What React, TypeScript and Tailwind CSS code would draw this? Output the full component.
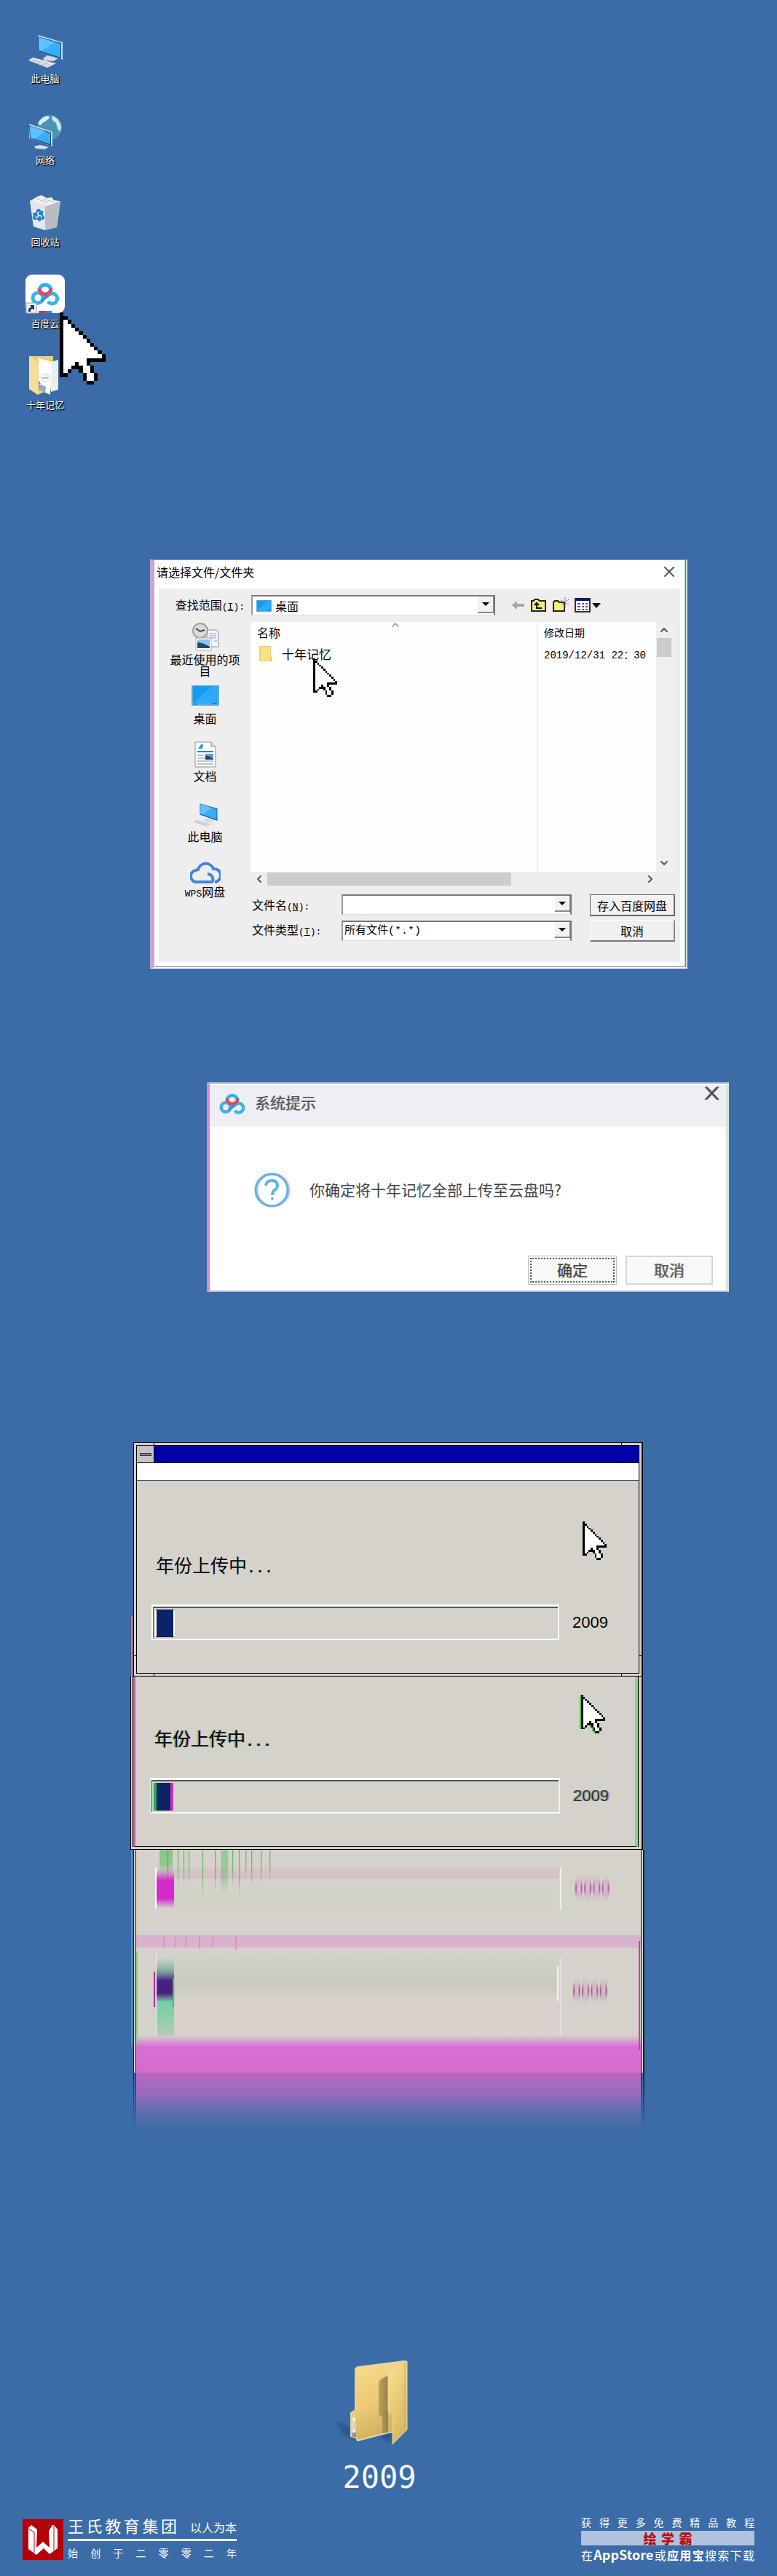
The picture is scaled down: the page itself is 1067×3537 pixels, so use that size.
import React, { useState } from 'react';
import { ChevronDown, ChevronLeft, ChevronRight, ChevronUp, Recycle, X } from 'lucide-react';

const CURSOR_ROWS = [
    'X',
    'XX',
    'XoX',
    'XooX',
    'XoooX',
    'XooooX',
    'XoooooX',
    'XooooooX',
    'XoooooooX',
    'XooooooooX',
    'XoooooooooX',
    'XooooooooooX',
    'XooooooXXXXX',
    'XoooXooX',
    'XooXXXooX',
    'XoX..XooX',
    'XX....XooX',
    '......XooX',
    '.......XX',
];

const PixelCursor = ({ className }: { className: string }) => (
    <svg className={className} viewBox="0 0 12 19" shapeRendering="crispEdges" aria-hidden="true">
        {CURSOR_ROWS.map((row, y) =>
            row.split('').map((cell, x) =>
                cell === '.' ? null : (
                    <rect key={`${x}-${y}`} x={x} y={y} width="1" height="1" fill={cell === 'X' ? '#000' : '#fff'} />
                )
            )
        )}
    </svg>
);

const ComputerIcon = ({ className }: { className: string }) => (
    <svg className={className} viewBox="0 0 54 54" aria-hidden="true">
        <path d="M4 42 L10 38 L42 46 L30 52 Z" fill="#e3e3e6" />
        <path d="M9 41 L34 48 M7 43 L31 50 M14 40 L10 44 M22 42 L17 46 M30 44 L25 48" stroke="#b8bcc4" strokeWidth="1" />
        <path d="M24 39 L30 35 L45 39 L38 43 L26 42 Z" fill="#d5dae2" />
        <path d="M17 7 L51 17 L51 41 L17 29 Z" fill="#c3dcef" />
        <path d="M17 9 L49 18 L49 40 L17 29 Z" fill="#174a78" />
        <path d="M18 10 L48 19 L48 38 L18 28 Z" fill="#38aef8" />
        <path d="M18 10 L40 17 L22 29 L18 28 Z" fill="#5cc3ff" />
    </svg>
);

const NetworkIcon = ({ className }: { className: string }) => (
    <svg className={className} viewBox="0 0 54 54" aria-hidden="true">
        <circle cx="33" cy="22" r="17" fill="#4d94b4" />
        <path d="M17 17 Q21 7 31 6 L33 9 L27 14 L23 16 L21 19 Z" fill="#d6edf5" />
        <path d="M36 6 Q47 9 49 21 L48 28 L44 24 L42 16 L37 12 Z" fill="#c6e6f0" />
        <path d="M12 48 L20 46 L32 49 L26 52 L14 51 Z" fill="#dcdfe3" />
        <path d="M5 17 L37 28 L37 48 L5 37 Z" fill="#c3dcef" />
        <path d="M5 19 L35 29 L35 47 L6 37 Z" fill="#174a78" />
        <path d="M6 20 L34 30 L34 45 L7 36 Z" fill="#38aef8" />
        <path d="M6 20 L27 27 L12 38 L7 36 Z" fill="#5cc3ff" />
    </svg>
);

const BinIcon = ({ className }: { className: string }) => (
    <svg className={className} viewBox="0 0 54 54" aria-hidden="true">
        <path d="M6 10 L48 11 L43 47 L27 51 L11 46 Z" fill="#cfd3d8" />
        <path d="M27 18 L48 11 L43 47 L27 51 Z" fill="#b9bdc3" />
        <path d="M8 10 L16 5 L22 3 L29 7 L36 6 L39 10 L46 11 L35 16 L28 18 L14 13 Z" fill="#eef0f2" />
        <path d="M16 7 L22 11 L30 8 M24 14 L33 10 L38 13" stroke="#b5b9be" strokeWidth="1" fill="none" />
        <path d="M6 10 L27 18 L27 51 L11 46 Z" fill="#e3e6ea" />
        <Recycle x={9} y={21} width={18} height={18} color="#1c86cc" strokeWidth={4} />
    </svg>
);

const BaiduRings = () => (
    <g fill="none" strokeWidth="5">
        <circle cx="17" cy="32" r="7" stroke="#3db4e4" />
        <path d="M22 28 L28 28 L33 27 A7 7 0 1 1 31 37" stroke="#3bb6e2" />
        <path d="M19 22 A8 8 0 1 1 35 22" stroke="#2fb3e0" />
        <path d="M19 19 A8 8 0 0 0 35 19" stroke="#e8455f" />
        <path d="M22 36 L32 28" stroke="#3b8fdc" strokeWidth="4" />
    </g>
);

const BaiduIcon = ({ className }: { className: string }) => (
    <svg className={className} viewBox="0 0 54 54" aria-hidden="true">
        <rect width="54" height="53" rx="9" fill="#fff" />
        <BaiduRings />
        <path d="M18 50 H27 V53 H18 Z" fill="#e03040" />
        <path d="M27 50 H36 V53 H27 Z" fill="#2f7fd8" />
        <rect x="1" y="39" width="14" height="14" fill="#eef2f8" stroke="#9a9aa6" />
        <path d="M4 51 Q3 45 8 45 L6 42 L12 42 L12 49 L10 47 Q7 47 7 51 Z" fill="#1d3a78" />
    </svg>
);

const MemoryFolderIcon = ({ className }: { className: string }) => (
    <svg className={className} viewBox="0 0 54 54" aria-hidden="true">
        <path d="M5 0 H38 V44 L17 53 L5 45 Z" fill="#e9cf81" />
        <path d="M5 0 L17 8 V53 L5 45 Z" fill="#f5de97" />
        <path d="M35 8 L45 5 V46 L35 49 Z" fill="#e9eef3" />
        <path d="M18 3 L33 7 Q36 8 36 11 L34 53 L18 46 Z" fill="#fff" />
        <path d="M18 38 L28 42 L27 50 L18 46 Z" fill="#8cabb6" />
        <circle cx="27" cy="30" r="6" fill="#f3f4f5" stroke="#d5d8da" />
        <path d="M23 30 H31" stroke="#808890" />
        <path d="M18 35 L20 38" stroke="#d4675b" strokeWidth="2" />
    </svg>
);

const RecentIcon = () => (
    <svg className="h-10 w-10" viewBox="0 0 40 40" aria-hidden="true">
        <path d="M22 11 H35 L38 14 V34 H22 Z" fill="#f5f6f8" stroke="#8b8f98" />
        <path d="M25 16 H35 M25 19 H35 M25 22 H35 M32 26 H36" stroke="#7fa2c8" />
        <circle cx="13" cy="12" r="10" fill="#dedbd5" stroke="#a29da2" strokeWidth="2" />
        <path d="M7 9 L13 13 L19 11" stroke="#444" strokeWidth="2" fill="none" />
        <path d="M7 22 H28 V39 H7 Z" fill="#fff" stroke="#b0a9b4" />
        <path d="M9 24 H26 V36 H9 Z" fill="#8fc4ea" />
        <path d="M9 28 Q16 28 26 34 V36 H9 Z" fill="#1f4a6a" />
    </svg>
);

const DesktopIcon = ({ className }: { className: string }) => (
    <svg className={className} viewBox="0 0 38 28" preserveAspectRatio="none" aria-hidden="true">
        <rect width="38" height="28" fill="#5eaee0" />
        <rect x="2" y="1" width="34" height="24" fill="#159bf5" />
        <path d="M2 25 L28 1 H36 V25 Z" fill="#2ea8fb" />
        <path d="M3 26 H7 M28 25 H35" stroke="#0b4c86" strokeWidth="1" />
    </svg>
);

const DocumentIcon = () => (
    <svg className="h-9 w-[30px]" viewBox="0 0 30 36" aria-hidden="true">
        <path d="M1 1 H23 L29 7 V35 H1 Z" fill="#fff" stroke="#8f9196" />
        <path d="M23 1 V7 H29" fill="#dcdcdc" stroke="#8f9196" />
        <path d="M5 10 L9 4 L12 4 L11 10 Z" fill="#2d9be0" />
        <path d="M4 14 H26" stroke="#2a86c8" strokeWidth="2" />
        <path d="M4 19 H14 M4 23 H14 M4 27 H26 M4 31 H26" stroke="#7d8894" />
        <rect x="15" y="17" width="11" height="8" fill="#5aa2cf" />
        <path d="M15 20 Q19 19 26 24 V25 H15 Z" fill="#1c4560" />
    </svg>
);

const WpsCloudIcon = () => (
    <svg className="h-8 w-[42px]" viewBox="0 0 42 32" fill="none" aria-hidden="true">
        <path
            d="M31 30 H10 A8 8 0 0 1 8 14 Q10 13 11 13 A11 11 0 0 1 32 12 A9 9 0 0 1 34 30 M31 30 Q33 20 24 19"
            stroke="#3f87dd"
            strokeWidth="4"
        />
    </svg>
);

const SmallFolderIcon = () => (
    <svg className="h-6 w-5" viewBox="0 0 20 24" aria-hidden="true">
        <path d="M1 1 H17 V15 L19 17 V22 H1 Z" fill="#efcf6d" />
        <path d="M3 2 H16 V21 H3 Z" fill="#fbe08c" />
    </svg>
);

const Mono = ({ children }: { children: React.ReactNode }) => (
    <span className="font-['Liberation_Mono',monospace] text-[13px] leading-3">{children}</span>
);

const desktopItems = [
    { label: '此电脑', Icon: ComputerIcon },
    { label: '网络', Icon: NetworkIcon },
    { label: '回收站', Icon: BinIcon },
    { label: '百度云', Icon: BaiduIcon },
    { label: '十年记忆', Icon: MemoryFolderIcon },
];

const DesktopIcons = () => (
    <nav className="flex flex-col items-start gap-[35px] pt-[41px] pl-[22px]">
        {desktopItems.map(({ label, Icon }) => (
            <a
                key={label}
                href="#"
                className="relative flex w-20 flex-col items-center gap-[3px] text-[13px] leading-5 text-white [text-shadow:1px_1px_2px_#000,1px_1px_1px_#000]"
            >
                <Icon className="h-[54px] w-[54px]" />
                {label}
                {label === '百度云' && <PixelCursor className="absolute top-[52px] left-[60px] z-10 h-[99px] w-[63px]" />}
            </a>
        ))}
    </nav>
);

const places = [
    { label: '最近使用的项目', icon: <RecentIcon />, box: 'h-[87px]' },
    { label: '桌面', icon: <DesktopIcon className="h-7 w-[38px]" />, box: 'h-[77px]' },
    { label: '文档', icon: <DocumentIcon />, box: 'h-[79px]' },
    { label: '此电脑', icon: <ComputerIcon className="h-10 w-11" />, box: 'h-[84px]' },
    { label: 'WPS网盘', icon: <WpsCloudIcon />, box: 'h-14' },
];

const Triangle = () => (
    <svg className="h-[5px] w-[10px]" viewBox="0 0 10 5" aria-hidden="true">
        <path d="M0 0 H10 L5 5 Z" fill="#000" />
    </svg>
);

const FileDialog = () => {
    const [fileName, setFileName] = useState('');

    return (
        <section className="border-t border-r-2 border-b-2 border-l-[6px] border-t-[#7890aa] border-r-[#d5d2e2] border-b-white border-l-[#c9a3d0] text-base leading-4 text-black">
            <div className="border-r border-b border-[#777] bg-white">
                <header className="flex h-[39px] items-center justify-between border-r-2 border-[#c4edc8] pr-2 pb-2 pl-[3px]">
                    <h2>请选择文件/文件夹</h2>
                    <button type="button" aria-label="关闭">
                        <X className="h-6 w-6 text-[#555]" strokeWidth={2} />
                    </button>
                </header>
                <div className="border-r-2 border-[#c4edc8] pr-[5px] pb-[6px] pl-[6px]">
                    <div className="bg-[#efeeef] pb-7">
                        <div className="flex h-[46px] items-start pt-[9px]">
                            <label htmlFor="look-in" className="w-[127px] pt-[5px] pr-[9px] text-right">
                                查找范围<Mono>(<u>I</u>):</Mono>
                            </label>
                            <div className="relative flex h-7 w-[335px] items-center border-t-2 border-r-2 border-b border-l-2 border-t-[#777] border-r-[#777] border-b-[#ddd] border-l-[#999] bg-white pl-[5px]">
                                <DesktopIcon className="h-4 w-[21px]" />
                                <select id="look-in" className="h-full flex-1 appearance-none bg-white pl-[5px] text-base leading-4 outline-none">
                                    <option>桌面</option>
                                </select>
                                <span className="pointer-events-none absolute top-0 right-0 flex h-[23px] w-[22px] items-center justify-center border-r border-b-2 border-[#888] bg-[#f3f2f3]">
                                    <Triangle />
                                </span>
                            </div>
                            <div className="flex items-center gap-2 pt-[3px] pl-[23px]">
                                <button type="button" aria-label="后退">
                                    <svg className="h-3 w-[18px]" viewBox="0 0 18 12">
                                        <path d="M0 6 L7 0 V4 H17 V8 H7 V12 Z" fill="#a9a5aa" />
                                    </svg>
                                </button>
                                <button type="button" aria-label="向上一级">
                                    <svg className="h-[21px] w-[22px]" viewBox="0 0 22 21">
                                        <path d="M1 4 H4 L5 2 H10 L12 4 H20 V18 H1 Z" fill="#f6ef79" stroke="#222" strokeWidth="2" />
                                        <path d="M8 8 V14 H15 M5 10 L8 7 L11 10" stroke="#111" strokeWidth="2" fill="none" />
                                    </svg>
                                </button>
                                <button type="button" aria-label="新建文件夹">
                                    <svg className="h-[22px] w-[22px]" viewBox="0 0 22 22">
                                        <path d="M1 7 L3 5 H7 L9 7 H16 V19 H1 Z" fill="#f6ef79" stroke="#222" strokeWidth="2" />
                                        <path d="M17 0 V14 M11 4 L22 11 M22 3 L12 11" stroke="#8a3c9c" strokeDasharray="2 1" />
                                    </svg>
                                </button>
                                <button type="button" aria-label="查看" className="flex items-center gap-[2px]">
                                    <svg className="h-5 w-[22px]" viewBox="0 0 22 20">
                                        <rect x="1" y="1" width="20" height="18" fill="#fff" stroke="#333" strokeWidth="2" />
                                        <path d="M1 2 H21" stroke="#101c66" strokeWidth="4" />
                                        <path d="M4 8 H8 M10 8 H13 M15 8 H18 M4 12 H8 M10 12 H13 M15 12 H18 M4 16 H8 M10 16 H13 M15 16 H18" stroke="#63509c" strokeWidth="2" />
                                    </svg>
                                    <svg className="h-[7px] w-3" viewBox="0 0 12 7">
                                        <path d="M0 0 H12 L6 7 Z" fill="#111" />
                                    </svg>
                                </button>
                            </div>
                        </div>
                        <div className="flex">
                            <ul className="flex w-[127px] flex-col">
                                {places.map((place) => (
                                    <li key={place.label} className={place.box}>
                                        <a href="#" className="flex flex-col items-center gap-[3px] text-center">
                                            {place.icon}
                                            <span className={place.label === '桌面' ? 'w-[98px] pt-[6px]' : 'w-[98px]'}>
                                                {place.label === 'WPS网盘' ? (
                                                    <>
                                                        <Mono>WPS</Mono>网盘
                                                    </>
                                                ) : (
                                                    place.label
                                                )}
                                            </span>
                                        </a>
                                    </li>
                                ))}
                            </ul>
                            <div className="min-w-0 flex-1 pr-[7px]">
                                <div className="flex h-[343px]">
                                    <div className="relative min-w-0 flex-1 bg-[#fefefe]">
                                        <table className="h-full w-full table-fixed text-left">
                                            <thead>
                                                <tr className="h-7">
                                                    <th scope="col" className="pl-2 font-normal">名称</th>
                                                    <th scope="col" className="w-[163px] border-l-2 border-[#eee] pl-2 text-sm font-normal">修改日期</th>
                                                </tr>
                                            </thead>
                                            <tbody>
                                                <tr className="h-8">
                                                    <td className="pl-[10px]">
                                                        <span className="flex items-center gap-3 text-[17px]">
                                                            <SmallFolderIcon />
                                                            十年记忆
                                                        </span>
                                                    </td>
                                                    <td className="border-l-2 border-[#eee] pt-1 pl-2 font-['Liberation_Mono','Noto_Sans_CJK_SC',monospace] text-sm whitespace-nowrap">
                                                        2019/12/31 22：30
                                                    </td>
                                                </tr>
                                                <tr>
                                                    <td></td>
                                                    <td className="border-l-2 border-[#eee]"></td>
                                                </tr>
                                            </tbody>
                                        </table>
                                        <ChevronUp className="absolute -top-1 left-[190px] h-4 w-4 text-[#888]" strokeWidth={2} />
                                        <PixelCursor className="absolute top-[50px] left-[85px] h-[53px] w-[33px]" />
                                    </div>
                                    <div className="flex w-[26px] flex-col items-center bg-[#eeefee] pr-[5px]">
                                        <ChevronUp className="my-[3px] h-4 w-4 text-[#555]" strokeWidth={3} />
                                        <span className="h-[26px] w-5 bg-[#cdcbcd]" />
                                        <ChevronDown className="mt-auto mb-1 h-4 w-4 text-[#555]" strokeWidth={3} />
                                    </div>
                                </div>
                                <div className="flex h-[19px] items-center pr-[26px]">
                                    <ChevronLeft className="mx-[3px] h-4 w-4 text-[#555]" strokeWidth={3} />
                                    <span className="h-[18px] w-[335px] bg-[#cdcbcd]" />
                                    <ChevronRight className="ml-auto h-4 w-4 text-[#555]" strokeWidth={3} />
                                </div>
                                <div className="flex items-start justify-between pt-3">
                                    <div className="grid grid-cols-[123px_316px] gap-y-2 pl-[1px]">
                                        <label htmlFor="file-name" className="pt-[6px]">
                                            文件名<Mono>(<u>N</u>):</Mono>
                                        </label>
                                        <div className="relative h-7 border-t-2 border-r-2 border-b border-l-2 border-t-[#777] border-r-[#777] border-b-[#ddd] border-l-[#999] bg-white">
                                            <input
                                                id="file-name"
                                                value={fileName}
                                                onChange={(e) => setFileName(e.target.value)}
                                                className="h-full w-full bg-white px-1 outline-none"
                                            />
                                            <button type="button" aria-label="历史文件名" className="absolute top-0 right-0 flex h-[22px] w-[21px] items-center justify-center border-r border-b-2 border-[#888] bg-[#f3f2f3]">
                                                <Triangle />
                                            </button>
                                        </div>
                                        <label htmlFor="file-type" className="pt-1">
                                            文件类型<Mono>(<u>T</u>):</Mono>
                                        </label>
                                        <div className="relative h-7 border-t-2 border-r-2 border-b border-l-2 border-t-[#777] border-r-[#777] border-b-[#ddd] border-l-[#999] bg-white">
                                            <select
                                                id="file-type"
                                                className="h-full w-full appearance-none bg-white pl-[2px] font-['Liberation_Mono','Noto_Sans_CJK_SC',monospace] text-[15px] leading-5 outline-none"
                                            >
                                                <option>所有文件(*.*)</option>
                                            </select>
                                            <span className="pointer-events-none absolute top-0 right-0 flex h-[22px] w-[21px] items-center justify-center border-r border-b-2 border-[#888] bg-[#f3f2f3]">
                                                <Triangle />
                                            </span>
                                        </div>
                                    </div>
                                    <div className="flex w-[117px] flex-col gap-[5px]">
                                        <button type="button" className="h-[30px] border border-r-2 border-b-2 border-[#666] bg-[#f3f2f3] whitespace-nowrap">
                                            存入百度网盘
                                        </button>
                                        <button type="button" className="h-[30px] border-t border-r-2 border-b-2 border-l border-t-white border-r-[#888] border-b-[#777] border-l-white bg-[#f1f0f1]">
                                            取消
                                        </button>
                                    </div>
                                </div>
                            </div>
                        </div>
                    </div>
                </div>
            </div>
        </section>
    );
};

const ConfirmDialog = () => (
    <section className="flex h-[288px] flex-col border-t-2 border-r-4 border-b-2 border-l-4 border-t-[#aebacb] border-r-[#cfe9dc] border-b-[#aebacb] border-l-[#df83df] bg-white text-[21px] text-[#444]">
        <header className="flex h-[59px] items-start justify-between border-t-2 border-white bg-[#eeeff4] pr-2 pl-3">
            <div className="flex items-center gap-3 pt-[6px]">
                <svg className="h-9 w-[38px]" viewBox="6 7 42 36" aria-hidden="true">
                    <BaiduRings />
                </svg>
                <h2 className="text-[#555] [text-shadow:-1px_0_#a5dca5,1px_0_#e0a8e0]">系统提示</h2>
            </div>
            <button type="button" aria-label="关闭">
                <svg className="mt-[2px] h-[18px] w-6" viewBox="0 0 24 18" fill="none" strokeWidth="2">
                    <path d="M3 0 L20 18 M20 0 L3 18" stroke="#5cc45c" />
                    <path d="M5 0 L22 18 M22 0 L5 18" stroke="#b45ab4" />
                    <path d="M4 0 L21 18 M21 0 L4 18" stroke="#4a4a4a" />
                </svg>
            </button>
        </header>
        <div className="flex flex-1 items-center gap-[26px] pb-1 pl-[60px]">
            <svg className="h-[50px] w-[51px]" viewBox="0 0 51 50" fill="none" aria-hidden="true">
                <circle cx="27" cy="25" r="22" stroke="#e4b2f0" strokeWidth="3" />
                <circle cx="25" cy="25" r="22" stroke="#53b7e6" strokeWidth="3" />
                <path d="M17 19 Q18 12 25 12 Q33 12 33 19 Q33 23 28 26 Q26 28 26 32" stroke="#61b4e8" strokeWidth="4" />
                <circle cx="26" cy="37" r="2" fill="#7daeea" />
            </svg>
            <p>你确定将十年记忆全部上传至云盘吗?</p>
        </div>
        <div className="flex justify-end gap-3 pr-[18px] pb-2">
            <button type="button" className="h-10 w-[122px] border border-[#b6c4b6] bg-[#f8f8f8] p-[2px]">
                <span className="flex h-full items-center justify-center border-2 border-dotted border-[#555] text-[#444] [text-shadow:-1px_0_#a5dca5,1px_0_#e0a8e0]">
                    确定
                </span>
            </button>
            <button type="button" className="h-10 w-[120px] border-2 border-[#d8d4da] bg-[#f8f8f8] text-[#555] [text-shadow:-1px_0_#a5dca5,1px_0_#e0a8e0]">
                取消
            </button>
        </div>
    </section>
);

const UploadBody = ({ glitch }: { glitch?: boolean }) => (
    <div className={glitch ? 'pt-[25px] pr-9 pb-[45px] pl-5' : 'pt-14 pr-[42px] pb-[45px] pl-5'}>
        <div className={glitch ? 'flex h-[45px] justify-end pr-1' : 'flex h-[45px] justify-end pr-[2px]'}>
            {glitch ? (
                <PixelCursor className="h-[53px] w-[35px] drop-shadow-[-2px_0_0_#3fce3f]" />
            ) : (
                <PixelCursor className="h-[53px] w-[33px]" />
            )}
        </div>
        <p
            className={
                glitch
                    ? 'h-7 pl-[6px] text-[25px] leading-7 [text-shadow:-2px_0_#7fd07f,1px_0_#d070d0]'
                    : 'h-7 pl-[6px] text-[25px] leading-7'
            }
        >
            年份上传中<span className="font-['Liberation_Mono',monospace] text-xl leading-4 font-bold">...</span>
        </p>
        <div className="flex items-center gap-[18px] pt-[41px]">
            <div
                role="progressbar"
                aria-label="上传进度"
                aria-valuenow={4}
                className={
                    glitch
                        ? 'flex-1 border-2 border-t-[3px] border-white border-l-[#c9f0c9] border-r-[#eaf6e0]'
                        : 'flex-1 border-2 border-t-[3px] border-white'
                }
            >
                <div className="h-11 border-t-2 border-l border-[#555] p-[2px]">
                    <div
                        className={
                            glitch
                                ? 'h-[38px] w-[27px] border-r-4 border-l-4 border-r-[#cb2bc4] border-l-[#2aa65c] bg-[#0a2468]'
                                : 'h-[38px] w-[27px] border-2 border-t border-b border-white border-t-[#001040] border-b-[#001040] bg-[#0a2468]'
                        }
                    />
                </div>
            </div>
            <span
                className={
                    glitch
                        ? "font-['Liberation_Sans',sans-serif] text-[22px] leading-6 text-[#333] [text-shadow:-2px_0_#8fd08f,2px_0_#d080d0]"
                        : "font-['Liberation_Sans',sans-serif] text-[22px] leading-6"
                }
            >
                2009
            </span>
        </div>
    </div>
);

const STREAKS = [
    { x: 51, length: 66 },
    { x: 65, length: 50 },
    { x: 73, length: 50 },
    { x: 80, length: 50 },
    { x: 99, length: 66 },
    { x: 116, length: 58 },
    { x: 140, length: 50 },
    { x: 149, length: 66 },
    { x: 158, length: 40 },
    { x: 166, length: 50 },
    { x: 179, length: 50 },
    { x: 191, length: 44 },
];

// Smeared repeats of the upload window, fading out into the wallpaper
const GlitchTrail = () => (
    <svg className="-ml-1 block h-[400px] w-[calc(100%+7px)]" viewBox="0 0 706 400" preserveAspectRatio="none" aria-hidden="true">
        <defs>
            <linearGradient id="fade" x1="0" y1="0" x2="0" y2="1">
                <stop offset="0" stopColor="#b769bc" />
                <stop offset="0.35" stopColor="#9a6cbd" />
                <stop offset="0.7" stopColor="#5a6dae" />
                <stop offset="1" stopColor="#3b6ca8" />
            </linearGradient>
            <linearGradient id="edge" gradientUnits="userSpaceOnUse" x1="0" y1="300" x2="0" y2="385">
                <stop offset="0" stopColor="#15251b" />
                <stop offset="1" stopColor="#3b6ca8" />
            </linearGradient>
            <linearGradient id="green" x1="0" y1="0" x2="0" y2="1">
                <stop offset="0" stopColor="#36b83e" />
                <stop offset="0.6" stopColor="#36b83e" stopOpacity="0.8" />
                <stop offset="1" stopColor="#36b83e" stopOpacity="0" />
            </linearGradient>
            <linearGradient id="block" x1="0" y1="0" x2="0" y2="1">
                <stop offset="0" stopColor="#d12bc8" stopOpacity="0" />
                <stop offset="0.3" stopColor="#d12bc8" />
                <stop offset="0.75" stopColor="#d12bc8" />
                <stop offset="1" stopColor="#d12bc8" stopOpacity="0" />
            </linearGradient>
            <linearGradient id="block2" x1="0" y1="0" x2="0" y2="1">
                <stop offset="0" stopColor="#7fd0a0" stopOpacity="0" />
                <stop offset="0.2" stopColor="#7a9c9c" />
                <stop offset="0.3" stopColor="#4b2187" />
                <stop offset="0.45" stopColor="#461f80" />
                <stop offset="0.56" stopColor="#76cfa2" />
                <stop offset="0.75" stopColor="#8cd0a8" />
                <stop offset="1" stopColor="#b9c9bb" />
            </linearGradient>
            <linearGradient id="pink" x1="0" y1="0" x2="0" y2="1">
                <stop offset="0" stopColor="#d5cdcb" />
                <stop offset="0.3" stopColor="#d76fd3" />
                <stop offset="1" stopColor="#d66bc9" />
            </linearGradient>
            <linearGradient id="pinkSoft" x1="0" y1="0" x2="0" y2="1">
                <stop offset="0" stopColor="#d5d1cb" />
                <stop offset="0.4" stopColor="#d5c3c6" />
                <stop offset="1" stopColor="#d3c2c8" />
            </linearGradient>
            <linearGradient id="band" x1="0" y1="0" x2="0" y2="1">
                <stop offset="0" stopColor="#d2d1c8" />
                <stop offset="0.7" stopColor="#c9cac0" />
                <stop offset="1" stopColor="#cfd0c6" />
            </linearGradient>
            <linearGradient id="olive" x1="0" y1="0" x2="0" y2="1">
                <stop offset="0" stopColor="#d5d1cb" />
                <stop offset="0.6" stopColor="#d3d3c4" />
                <stop offset="1" stopColor="#d5d1cb" />
            </linearGradient>
            <filter id="smear" x="-10%" y="-100%" width="120%" height="300%">
                <feGaussianBlur stdDeviation="0 5" />
            </filter>
        </defs>
        <rect x="4" width="700" height="306" fill="#d5d1cb" />
        {/* first smear */}
        <rect x="60" y="22" width="528" height="18" fill="url(#pinkSoft)" />
        <rect x="60" y="50" width="526" height="40" fill="url(#olive)" />
        <rect x="40" width="18" height="34" fill="url(#green)" opacity="0.5" />
        <rect x="124" width="10" height="60" fill="url(#green)" opacity="0.4" />
        {STREAKS.map(({ x, length }) => (
            <rect key={x} x={x} y="0" width="1" height={length} fill="url(#green)" />
        ))}
        <rect x="34" y="24" width="2" height="56" fill="#fff" />
        <rect x="36" y="26" width="24" height="54" fill="url(#block)" />
        <rect x="589" y="24" width="2" height="58" fill="#eef5e4" />
        <text x="609" y="60" fontSize="22" fontFamily="Liberation Sans, sans-serif" fill="#b829ad" filter="url(#smear)">
            0000
        </text>
        {/* second smear */}
        <rect x="8" y="117" width="692" height="17" fill="#d8b3cb" />
        <path d="M46 120 V134 M62 120 V134 M76 120 V134 M95 118 V136 M113 120 V134 M145 118 V138" stroke="#cf7db0" strokeWidth="1" />
        <rect x="60" y="146" width="526" height="55" fill="url(#band)" />
        <rect x="60" y="201" width="530" height="53" fill="#dad0cc" />
        <path d="M33 168 V216 M37 165 V220" stroke="#b029a8" strokeWidth="2" />
        <rect x="36" y="146" width="24" height="112" fill="url(#block2)" />
        <rect x="35" y="140" width="1" height="118" fill="#f5f0f2" />
        <rect x="58" y="176" width="2" height="40" fill="#35ce58" />
        <rect x="585" y="160" width="2" height="48" fill="#f2fbe8" />
        <rect x="589" y="148" width="2" height="110" fill="#eadce4" />
        <text x="606" y="201" fontSize="22" fontFamily="Liberation Sans, sans-serif" fill="#a02f8e" filter="url(#smear)">
            0000
        </text>
        <rect x="8" y="255" width="692" height="52" fill="url(#pink)" />
        <rect x="8" y="306" width="692" height="80" fill="url(#fade)" />
        {/* frame edges */}
        <rect x="1" width="2" height="270" fill="#4b91b8" />
        <rect x="4" width="1" height="385" fill="url(#edge)" />
        <rect x="7" width="1" height="385" fill="url(#edge)" />
        <rect x="8" y="140" width="2" height="125" fill="#8bd58d" />
        <rect x="697" y="125" width="2" height="150" fill="#d038b4" />
        <rect x="700" width="1" height="385" fill="url(#edge)" />
        <rect x="703" width="2" height="385" fill="url(#edge)" />
    </svg>
);

const UploadWindows = () => (
    <section className="text-black">
        <div className="relative border border-r-2 border-black bg-[#d5d1cb] p-[3px]">
            <div className="border border-black">
                <div className="flex h-6 border-b border-black">
                    <button type="button" aria-label="窗口菜单" className="flex w-6 items-center justify-center border-r border-black bg-[#c4c4c8]">
                        <span className="h-1 w-4 border border-[#333] bg-[#888]" />
                    </button>
                    <div className="flex-1 bg-[#0000a8]" />
                </div>
                <div className="h-6 border-b border-[#333] bg-white" />
                <UploadBody />
            </div>
            <span className="absolute top-0 left-[27px] h-1 w-px bg-black" />
            <span className="absolute top-0 right-[27px] h-1 w-px bg-black" />
            <span className="absolute bottom-0 left-[27px] h-1 w-px bg-black" />
            <span className="absolute right-[27px] bottom-0 h-1 w-px bg-black" />
            <span className="absolute bottom-[27px] left-0 h-px w-1 bg-black" />
            <span className="absolute right-0 bottom-[27px] h-px w-1 bg-black" />
            <span className="absolute top-[237px] bottom-0 -left-[5px] w-1 border border-b-0 border-[#5a4a70] bg-[#a58ab5]" />
        </div>
        <div className="-ml-1 border-r-2 border-b border-l border-black bg-[#d5d1cb] pb-[3px]">
            <div className="mr-1 ml-[2px] border-r border-l border-black">
                <div className="border-r-4 border-b border-l-[3px] border-r-[#7ed985] border-b-black border-l-[#c65fbb]">
                    <UploadBody glitch />
                </div>
            </div>
        </div>
        <GlitchTrail />
    </section>
);

const YearFolder = () => (
    <a href="#" className="flex w-[132px] flex-col items-center gap-5 text-[42px] leading-[48px] text-[#f4fbff]">
        <svg className="h-[120px] w-[112px] self-start" viewBox="0 0 112 120" aria-hidden="true">
            <defs>
                <linearGradient id="folderBack" x1="0" y1="0" x2="0.3" y2="1">
                    <stop offset="0" stopColor="#f9dd8a" />
                    <stop offset="0.6" stopColor="#ecc976" />
                    <stop offset="1" stopColor="#d3b05e" />
                </linearGradient>
                <linearGradient id="folderFront" x1="0" y1="0" x2="0.5" y2="1">
                    <stop offset="0" stopColor="#fbe592" />
                    <stop offset="1" stopColor="#d9b763" />
                </linearGradient>
                <linearGradient id="folderShade" x1="0" y1="0" x2="1" y2="0">
                    <stop offset="0" stopColor="#bda15a" />
                    <stop offset="1" stopColor="#97814a" />
                </linearGradient>
                <filter id="soft">
                    <feGaussianBlur stdDeviation="2" />
                </filter>
            </defs>
            <path d="M4 86 L28 95 L34 112 L18 106 Z M62 106 L84 100 L82 116 Z" fill="#234f87" opacity="0.7" filter="url(#soft)" />
            <path d="M33 17 Q33 13 37 12 L101 4 L101 99 L79 102 L36 113 L34 109 L27 107 L27 75 L33 71 Z" fill="url(#folderBack)" stroke="#dcd6ad" strokeWidth="2" />
            <path d="M65 34 Q66 28 78 24 L78 102 L70 103 L70 81 L65 77 Z" fill="url(#folderShade)" />
            <path d="M78 22 Q78 19 81 17 L104 4 V98 L84 118 L84 76 L78 73 Z" fill="url(#folderFront)" stroke="#e8d798" strokeWidth="1" />
            <path d="M101 6 V100" stroke="#c9a95b" strokeWidth="1" />
            <path d="M29 81 H33 V102 H29 Z" fill="#f5f3ee" />
            <path d="M29 102 H34 V108 H29 Z" fill="#8794ad" />
            <path d="M31 86 V98" stroke="#9aa5b8" strokeWidth="1" />
        </svg>
        <span className="font-['DejaVu_Sans_Mono',monospace]">2009</span>
    </a>
);

const Footer = () => (
    <footer className="flex items-start justify-between pr-[31px] pb-[15px] pl-[31px] text-white">
        <div className="flex items-start gap-[6px]">
            <svg className="mt-[6px] h-14 w-14" viewBox="0 0 56 56" aria-hidden="true">
                <rect width="56" height="56" fill="#b40008" />
                <path d="M8 12 L12 8 L20 14 L19 39 L28 31 L37 39 L36 16 L41 8 L43 8 L48 14 V40 L37 48 L29 40 L19 49 L8 41 Z" fill="#fff" />
                <path d="M8 13 L16 18 V46 M43 9 V43" stroke="#b40008" strokeWidth="1" fill="none" />
            </svg>
            <div className="w-[232px]">
                <div className="flex h-9 items-start justify-between border-b-[3px] border-white">
                    <strong className="w-[150px] text-[22px] leading-7 font-normal [text-align-last:justify]">王氏教育集团</strong>
                    <span className="pt-[7px] text-base leading-5">以人为本</span>
                </div>
                <p className="pt-[6px] text-sm leading-5 [text-align-last:justify]">始创于二零零二年</p>
            </div>
        </div>
        <div className="w-[238px]">
            <p className="pb-[2px] text-sm leading-5 [text-align-last:justify]">获得更多免费精品教程</p>
            <p className="flex h-5 items-center justify-center bg-[#b0c2dd] text-lg leading-5 font-black text-[#bc0a14]">
                <span className="w-[67px] [text-align-last:justify]">绘学霸</span>
            </p>
            <p className="text-base leading-6 whitespace-nowrap [text-align-last:justify]">
                在<b className="text-lg leading-6">AppStore</b>或<b>应用宝</b>搜索下载
            </p>
        </div>
    </footer>
);

const App = () => (
    <main className="flex min-h-screen flex-col overflow-x-hidden bg-[#3b6ca8] font-['Noto_Sans_CJK_SC',sans-serif]">
        <DesktopIcons />
        <div className="pt-[202px] pr-[123px] pl-[206px]">
            <FileDialog />
        </div>
        <div className="pt-[156px] pr-[66px] pl-[284px]">
            <ConfirmDialog />
        </div>
        <div className="pt-[206px] pr-[184px] pl-[183px]">
            <UploadWindows />
        </div>
        <div className="flex justify-center pt-[298px] pr-[25px]">
            <YearFolder />
        </div>
        <div className="pt-[27px]">
            <Footer />
        </div>
    </main>
);

export default App;
